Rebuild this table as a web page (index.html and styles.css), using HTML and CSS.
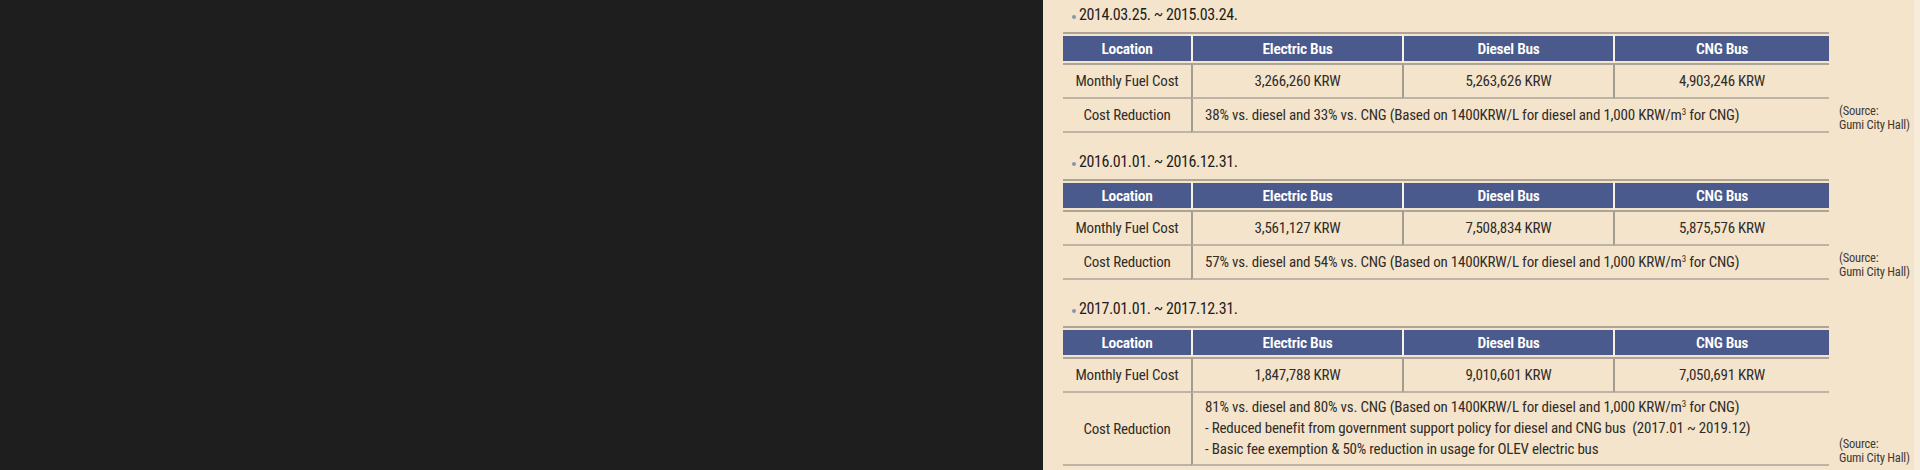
FILE: index.html
```html
<!DOCTYPE html>
<html lang="en">
<head>
    <meta charset="UTF-8">
    <meta name="viewport" content="width=device-width, initial-scale=1.0">
    <title>Electric Bus Fuel Cost</title>
    <link rel="stylesheet" href="styles.css">
</head>
<body>
    <div class="viewer">
        <div class="blank"></div>

        <div class="sheet">
            <!-- first operating year -->
            <section class="period">
                <h3 class="period-title">2014.03.25. ~ 2015.03.24.</h3>
                <div class="period-body">
                    <table class="cost">
                        <colgroup>
                            <col class="c-loc"><col class="c-bus"><col class="c-bus"><col class="c-cng">
                        </colgroup>
                        <thead>
                            <tr><th>Location</th><th>Electric Bus</th><th>Diesel Bus</th><th>CNG Bus</th></tr>
                        </thead>
                        <tbody>
                            <tr><td>Monthly Fuel Cost</td><td>3,266,260 KRW</td><td>5,263,626 KRW</td><td>4,903,246 KRW</td></tr>
                            <tr><td>Cost Reduction</td><td colspan="3" class="note">38% vs. diesel and 33% vs. CNG (Based on 1400KRW/L for diesel and 1,000 KRW/m<sup>3</sup> for CNG)</td></tr>
                        </tbody>
                    </table>
                    <p class="source">(Source:<br>Gumi City Hall)</p>
                </div>
            </section>

            <section class="period">
                <h3 class="period-title">2016.01.01. ~ 2016.12.31.</h3>
                <div class="period-body">
                    <table class="cost">
                        <colgroup>
                            <col class="c-loc"><col class="c-bus"><col class="c-bus"><col class="c-cng">
                        </colgroup>
                        <thead>
                            <tr><th>Location</th><th>Electric Bus</th><th>Diesel Bus</th><th>CNG Bus</th></tr>
                        </thead>
                        <tbody>
                            <tr><td>Monthly Fuel Cost</td><td>3,561,127 KRW</td><td>7,508,834 KRW</td><td>5,875,576 KRW</td></tr>
                            <tr><td>Cost Reduction</td><td colspan="3" class="note">57% vs. diesel and 54% vs. CNG (Based on 1400KRW/L for diesel and 1,000 KRW/m<sup>3</sup> for CNG)</td></tr>
                        </tbody>
                    </table>
                    <p class="source">(Source:<br>Gumi City Hall)</p>
                </div>
            </section>

            <section class="period">
                <h3 class="period-title">2017.01.01. ~ 2017.12.31.</h3>
                <div class="period-body">
                    <table class="cost">
                        <colgroup>
                            <col class="c-loc"><col class="c-bus"><col class="c-bus"><col class="c-cng">
                        </colgroup>
                        <thead>
                            <tr><th>Location</th><th>Electric Bus</th><th>Diesel Bus</th><th>CNG Bus</th></tr>
                        </thead>
                        <tbody>
                            <tr><td>Monthly Fuel Cost</td><td>1,847,788 KRW</td><td>9,010,601 KRW</td><td>7,050,691 KRW</td></tr>
                            <tr class="tall">
                                <td>Cost Reduction</td>
                                <td colspan="3" class="note">
                                    81% vs. diesel and 80% vs. CNG (Based on 1400KRW/L for diesel and 1,000 KRW/m<sup>3</sup> for CNG)<br>
                                    - Reduced benefit from government support policy for diesel and CNG bus &nbsp;(2017.01 ~ 2019.12)<br>
                                    - Basic fee exemption &amp; 50% reduction in usage for OLEV electric bus
                                </td>
                            </tr>
                        </tbody>
                    </table>
                    <p class="source">(Source:<br>Gumi City Hall)</p>
                </div>
            </section>
        </div>

        <div class="edge"></div>
    </div>
</body>
</html>
```

FILE: styles.css
```css
body {
    margin: 0;
    background: #1e1e1e;
    font-family: Roboto, "Liberation Sans", sans-serif;
    font-stretch: 75%;
    color: #302c28;
}

.viewer {
    display: flex;
    height: 470px;
    overflow: hidden;
}

.blank {
    width: 1043px;
    flex: none;
}

.sheet {
    flex: 1;
    background: #f4e4cb;
    padding: 5px 0 0 20px;
}

.edge {
    width: 6px;
    background: #f7ecda;
}

.period {
    margin-bottom: 19px;
}

.period-title {
    position: relative;
    margin: 0 0 7px 0;
    padding-left: 16px;
    font-size: 16px;
    font-weight: normal;
    letter-spacing: -0.4px;
    line-height: 20px;
    color: #1f1c19;
}

.period-title::before {
    content: "";
    position: absolute;
    left: 9px;
    top: 10px;
    width: 4px;
    height: 4px;
    border-radius: 50%;
    background: #8a93b3;
}

.period-body {
    display: flex;
    align-items: flex-end;
}

.cost {
    width: 766px;
    table-layout: fixed;
    border-collapse: separate;
    border-spacing: 0;
    border-top: 2px solid #aba497;
    font-size: 15px;
    letter-spacing: -0.2px;
}

.c-loc { width: 128px; }
.c-bus { width: 211px; }
.c-cng { width: 216px; }

.cost th {
    height: 25px;
    padding: 0;
    background: #4b5a8c;
    background-clip: padding-box;
    border-top: 2px solid transparent;
    border-bottom: 2px solid transparent;
    color: #ffffff;
    font-size: 15.5px;
    font-weight: 600;
    letter-spacing: -0.3px;
    text-align: center;
}

.cost th + th {
    border-left: 2px solid #f8f1e4;
}

.cost td {
    height: 32px;
    padding: 0;
    border-bottom: 2px solid #bdb4a6;
    text-align: center;
    color: #302c28;
}

.cost td + td {
    border-left: 2px solid #a39c91;
}

.cost tbody tr:first-child td {
    border-top: 2px solid #aba497;
}

.cost td.note {
    text-align: left;
    padding-left: 12px;
}

.cost .tall td {
    height: 71px;
}

.cost .tall td.note {
    line-height: 21px;
}

.cost sup {
    font-size: 9px;
    vertical-align: 5px;
    line-height: 0;
}

.source {
    margin: 0 0 1px 10px;
    font-size: 12.5px;
    letter-spacing: -0.2px;
    line-height: 14px;
    color: #3f3a35;
}
```
